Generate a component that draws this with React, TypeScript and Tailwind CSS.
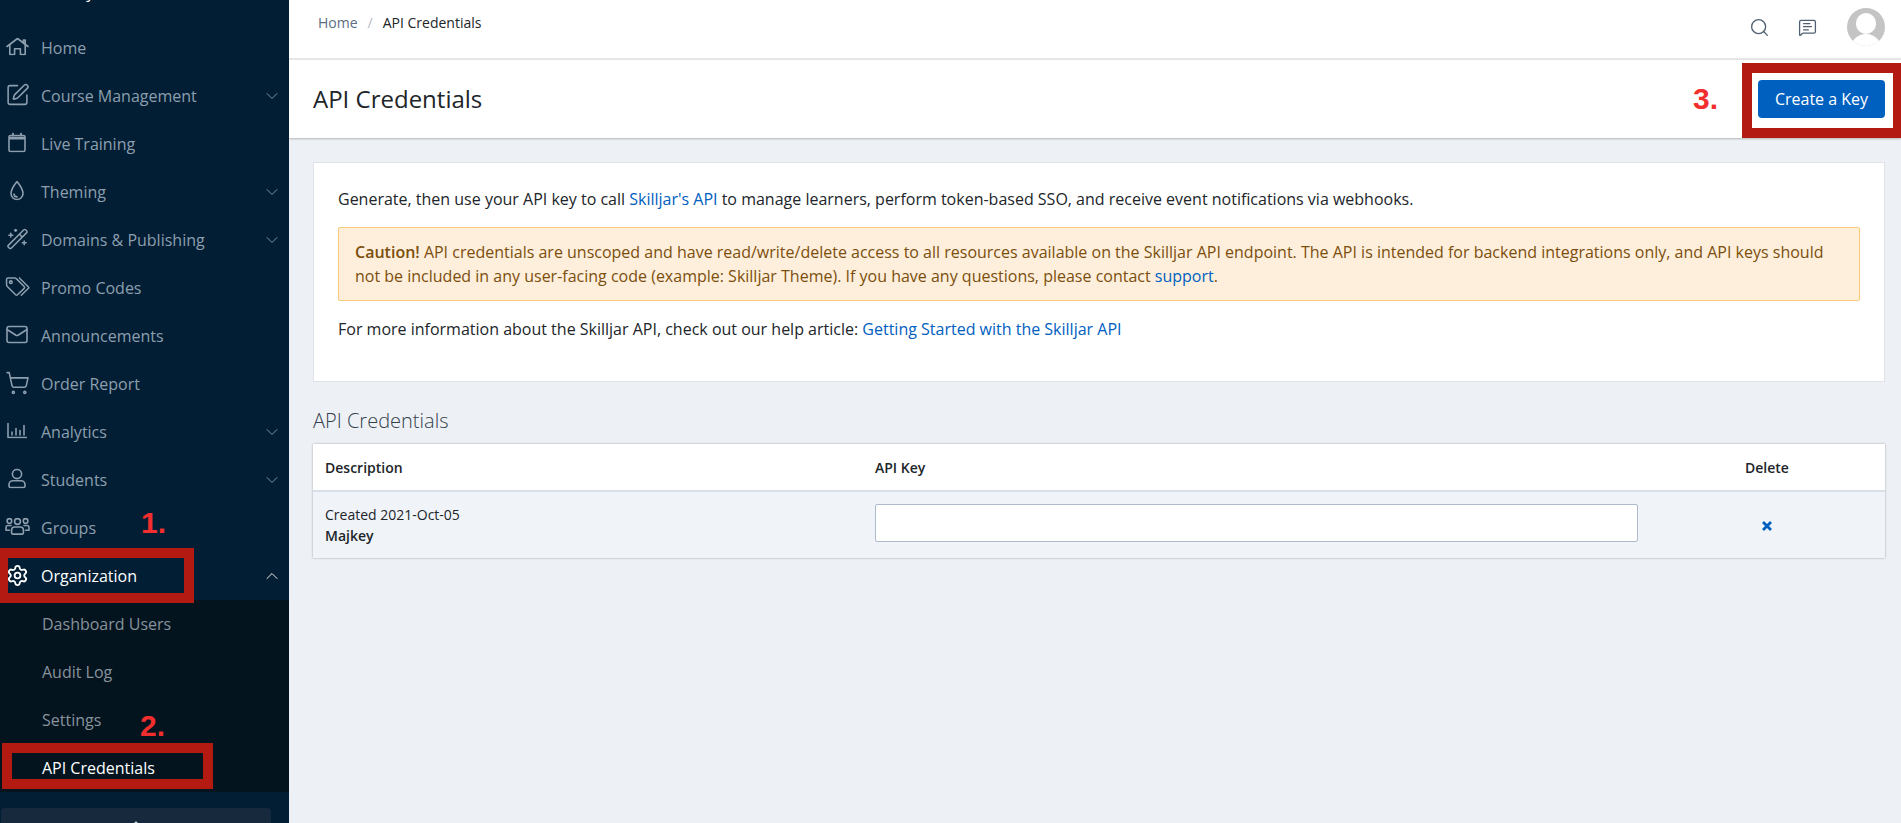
import { SquarePen, Wand2, Mail, ShoppingCart, Settings, ChevronDown, ChevronUp, Search, MessageSquareText } from "lucide-react";

const base = { fill: "none", stroke: "currentColor", strokeWidth: 1.6, strokeLinecap: "round" as const, strokeLinejoin: "round" as const };

const HomeIcon = () => (
  <svg width="23" height="18" viewBox="0 0 23 18" {...base}>
    <path d="M1 9 11.5 1 22 9" />
    <path d="M3.8 7.2V17H8.6V11.2H14.4V17H19.2V7.2" />
    <path d="M17.4 5.6V2.6H19.2V7" />
  </svg>
);
const CalendarIcon = () => (
  <svg width="18" height="20" viewBox="0 0 18 20" {...base}>
    <rect x="1" y="3" width="16" height="16" rx="1.5" />
    <path d="M1 5.6H17" strokeWidth="2.6" strokeLinecap="butt" />
    <path d="M5 1V3M13 1V3" strokeWidth="1.8" />
  </svg>
);
const DropIcon = () => (
  <svg width="14" height="20" viewBox="0 0 14 20" {...base}>
    <path d="M7 1C7 1 1 8.4 1 13A6 6 0 0 0 13 13C13 8.4 7 1 7 1Z" />
    <path d="M4 13.6A3 3 0 0 0 7 16.4" />
  </svg>
);
const TagsIcon = () => (
  <svg width="25" height="20" viewBox="0 0 26 21" {...base}>
    <path d="M1.5 3Q1.5 1.5 3 1.5H10Q11 1.5 12 2.5L20 10.5Q21 11.5 20 12.5L13 19.2Q12 20.2 11 19.2L2.3 10.5Q1.5 9.7 1.5 8.5Z" />
    <circle cx="6" cy="6" r="1.4" />
    <path d="M15 1.5 24.5 11Q25.2 11.7 24.5 12.4L17 19.7" />
  </svg>
);
const ChartIcon = () => (
  <svg width="20" height="16" viewBox="0 0 20 16" {...base}>
    <path d="M1 1V15H19.5" />
    <path d="M5 9.5V12.5M9 6V12.5M13 8V12.5M17 3V12.5" strokeWidth="1.6" />
  </svg>
);
const UserIcon = () => (
  <svg width="18" height="20" viewBox="0 0 18 20" {...base}>
    <circle cx="9" cy="5.5" r="4.6" />
    <path d="M5 12.2H13A4 4 0 0 1 17 16.2V17.5A1.5 1.5 0 0 1 15.5 19H2.5A1.5 1.5 0 0 1 1 17.5V16.2A4 4 0 0 1 5 12.2Z" />
  </svg>
);
const GroupIcon = () => (
  <svg width="25" height="18" viewBox="0 0 25 18" {...base}>
    <circle cx="12.5" cy="4" r="2.9" />
    <circle cx="4.4" cy="3.4" r="2.3" />
    <circle cx="20.6" cy="3.4" r="2.3" />
    <path d="M9.6 9.5H15.4A3 3 0 0 1 18.4 12.5V15.6A1 1 0 0 1 17.4 16.6H7.6A1 1 0 0 1 6.6 15.6V12.5A3 3 0 0 1 9.6 9.5Z" />
    <path d="M6 8H2.8A2 2 0 0 0 1 10V12.8H4.5M19 8H22.2A2 2 0 0 1 24 10V12.8H20.5" />
  </svg>
);

const items: { label: string; icon: React.ReactNode; chevron?: boolean }[] = [
  { label: "Home", icon: <HomeIcon /> },
  { label: "Course Management", icon: <SquarePen size={25} strokeWidth={1.5} />, chevron: true },
  { label: "Live Training", icon: <CalendarIcon />, },
  { label: "Theming", icon: <DropIcon />, chevron: true },
  { label: "Domains & Publishing", icon: <Wand2 size={23} strokeWidth={1.6} />, chevron: true },
  { label: "Promo Codes", icon: <TagsIcon /> },
  { label: "Announcements", icon: <Mail size={24} strokeWidth={1.6} /> },
  { label: "Order Report", icon: <ShoppingCart size={25} strokeWidth={1.5} /> },
  { label: "Analytics", icon: <ChartIcon />, chevron: true },
  { label: "Students", icon: <UserIcon />, chevron: true },
  { label: "Groups", icon: <GroupIcon /> },
];

export default function App() {
  return (
    <div className="relative flex h-[823px] w-[1901px] overflow-hidden bg-[#edf1f5] font-['Open_Sans',sans-serif] text-[#212529]">
      <aside className="flex h-full w-[289px] shrink-0 flex-col overflow-hidden bg-[#011e34] text-[16px] text-[#8d9eae]">
        <div className="h-[24px] shrink-0 -translate-y-[16px] overflow-visible pl-[26px] text-[16px] leading-[16px] text-white">Academy</div>
        {items.map(({ label, icon, chevron }) => (
          <div key={label} className="flex h-[48px] shrink-0 items-center">
            <div className="flex w-[34px] shrink-0 -translate-y-[1.5px] justify-center">{icon}</div>
            <span className="ml-[7px] flex-1">{label}</span>
            {chevron && <ChevronDown size={20} strokeWidth={1.1} className="mr-[7px]" />}
          </div>
        ))}
        <div className="flex h-[48px] shrink-0 items-center text-white">
          <div className="flex w-[34px] shrink-0 -translate-y-[1px] justify-center">
            <Settings size={23} strokeWidth={1.9} />
          </div>
          <span className="ml-[7px] flex-1">Organization</span>
          <ChevronUp size={20} strokeWidth={1.1} className="mr-[7px]" />
        </div>
        <div className="flex h-[192px] shrink-0 flex-col bg-[#03141f] pl-[42px]">
          <div className="flex h-[48px] items-center text-[#88929b]">Dashboard Users</div>
          <div className="flex h-[48px] items-center text-[#88929b]">Audit Log</div>
          <div className="flex h-[48px] items-center text-[#88929b]">Settings</div>
          <div className="flex h-[48px] items-center text-white">API Credentials</div>
        </div>
        <div className="mt-[16px] ml-[1px] flex h-[40px] w-[270px] shrink-0 justify-center rounded-[4px] bg-[#16293d] pt-[8px] text-[#c8d0d8]">
          <ChevronUp size={16} strokeWidth={2} />
        </div>
      </aside>

      <main className="flex min-w-0 flex-1 flex-col">
        <header className="flex h-[60px] shrink-0 items-start justify-between border-b-2 border-[#e8e8e8] bg-white">
          <div className="flex items-center pl-[29px] pt-[13px] text-[14px] leading-[20px]">
            <span className="text-[#5a6d82]">Home</span>
            <span className="px-[10px] text-[#b5bcc3]">/</span>
            <span>API Credentials</span>
          </div>
          <div className="flex items-center pr-[16px] pt-[8px]">
            <Search size={21} strokeWidth={1.5} className="mr-[28px] text-[#4f5f70]" />
            <MessageSquareText size={19} strokeWidth={1.6} className="mr-[30.5px] text-[#4f5f70]" />
            <div className="relative h-[38px] w-[38px] overflow-hidden rounded-full bg-[#c4c4c4]">
              <div className="absolute left-[9px] top-[5px] h-[21px] w-[20px] rounded-full bg-white" />
              <div className="absolute left-[3px] top-[26px] h-[24px] w-[32px] rounded-t-[16px] bg-white" />
            </div>
          </div>
        </header>

        <div className="flex h-[78px] shrink-0 items-center justify-between bg-white pl-[24px] pr-[16px] shadow-[0_1px_2px_rgba(0,0,0,0.25)]">
          <h1 className="text-[24px] font-normal">API Credentials</h1>
          <button className="h-[38px] w-[127px] rounded-[4px] bg-[#0060c0] text-[16px] text-white">Create a Key</button>
        </div>

        <div className="flex flex-1 flex-col pl-[24px] pt-[24px]">
          <section className="h-[220px] w-[1572px] border border-[#dfe3e8] bg-white px-[24px] pt-[24px] text-[16px] leading-[24px] text-[#212529]">
            <p>
              Generate, then use your API key to call <span className="text-[#0060c0]">Skilljar's API</span> to manage learners, perform token-based SSO, and receive event notifications via webhooks.
            </p>
            <div className="mt-[16px] rounded-[2px] border border-[#fbc97a] bg-[#feefdc] px-[16px] py-[12px] text-[#7c4e0c]">
              <b className="font-semibold">Caution!</b> API credentials are unscoped and have read/write/delete access to all resources available on the Skilljar API endpoint. The API is intended for backend integrations only, and API keys should not be included in any user-facing code (example: Skilljar Theme). If you have any questions, please contact <span className="text-[#0060c0]">support</span>.
            </div>
            <p className="mt-[16px]">
              For more information about the Skilljar API, check out our help article: <span className="text-[#0060c0]">Getting Started with the Skilljar API</span>
            </p>
          </section>

          <h2 className="mt-[25px] text-[20px] font-light leading-[28px] text-[#33404d]">API Credentials</h2>
          <div className="mt-[9px] w-[1572px] bg-white shadow-[0_0_2px_rgba(0,0,0,0.35)]">
            <div className="flex h-[48px] items-center border-b-2 border-[#d9dfe5] pt-[1px] text-[14px] font-semibold">
              <div className="w-[562px] pl-[12px]">Description</div>
              <div className="flex-1">API Key</div>
              <div className="w-[140px]">Delete</div>
            </div>
            <div className="flex h-[66px] items-center bg-[#f0f4f8] text-[14px]">
              <div className="w-[562px] pl-[12px] leading-[21px]">
                <div>Created 2021-Oct-05</div>
                <div className="font-semibold">Majkey</div>
              </div>
              <div className="flex-1 self-start pt-[12px]">
                <div className="h-[38px] w-[763px] rounded-[2px] border border-[#adbacb] bg-white" />
              </div>
              <div className="w-[140px] pl-[17px] pt-[1px] text-[#0060c0]">
                <svg width="10" height="10" viewBox="0 0 10 10" fill="none" stroke="currentColor" strokeWidth="2.8">
                  <path d="M1 1 9 9M9 1 1 9" />
                </svg>
              </div>
            </div>
          </div>
        </div>
      </main>

      <div className="absolute left-0 top-[548px] h-[55px] w-[194px] border-[10px] border-l-[8px] border-[#b31b12]" />
      <div className="absolute left-[2px] top-[743px] h-[46px] w-[211px] border-[10px] border-[#b31b12]" />
      <div className="absolute left-[1742px] top-[63px] h-[75px] w-[159px] border-[10px] border-r-[8px] border-[#b31b12]" />
      <span className="absolute left-[141px] top-[508px] font-['Liberation_Sans',sans-serif] text-[30px] font-bold leading-[30px] text-[#f22e2e]">1.</span>
      <span className="absolute left-[140px] top-[711px] font-['Liberation_Sans',sans-serif] text-[30px] font-bold leading-[30px] text-[#f22e2e]">2.</span>
      <span className="absolute left-[1693px] top-[84px] font-['Liberation_Sans',sans-serif] text-[30px] font-bold leading-[30px] text-[#f22e2e]">3.</span>
    </div>
  );
}
